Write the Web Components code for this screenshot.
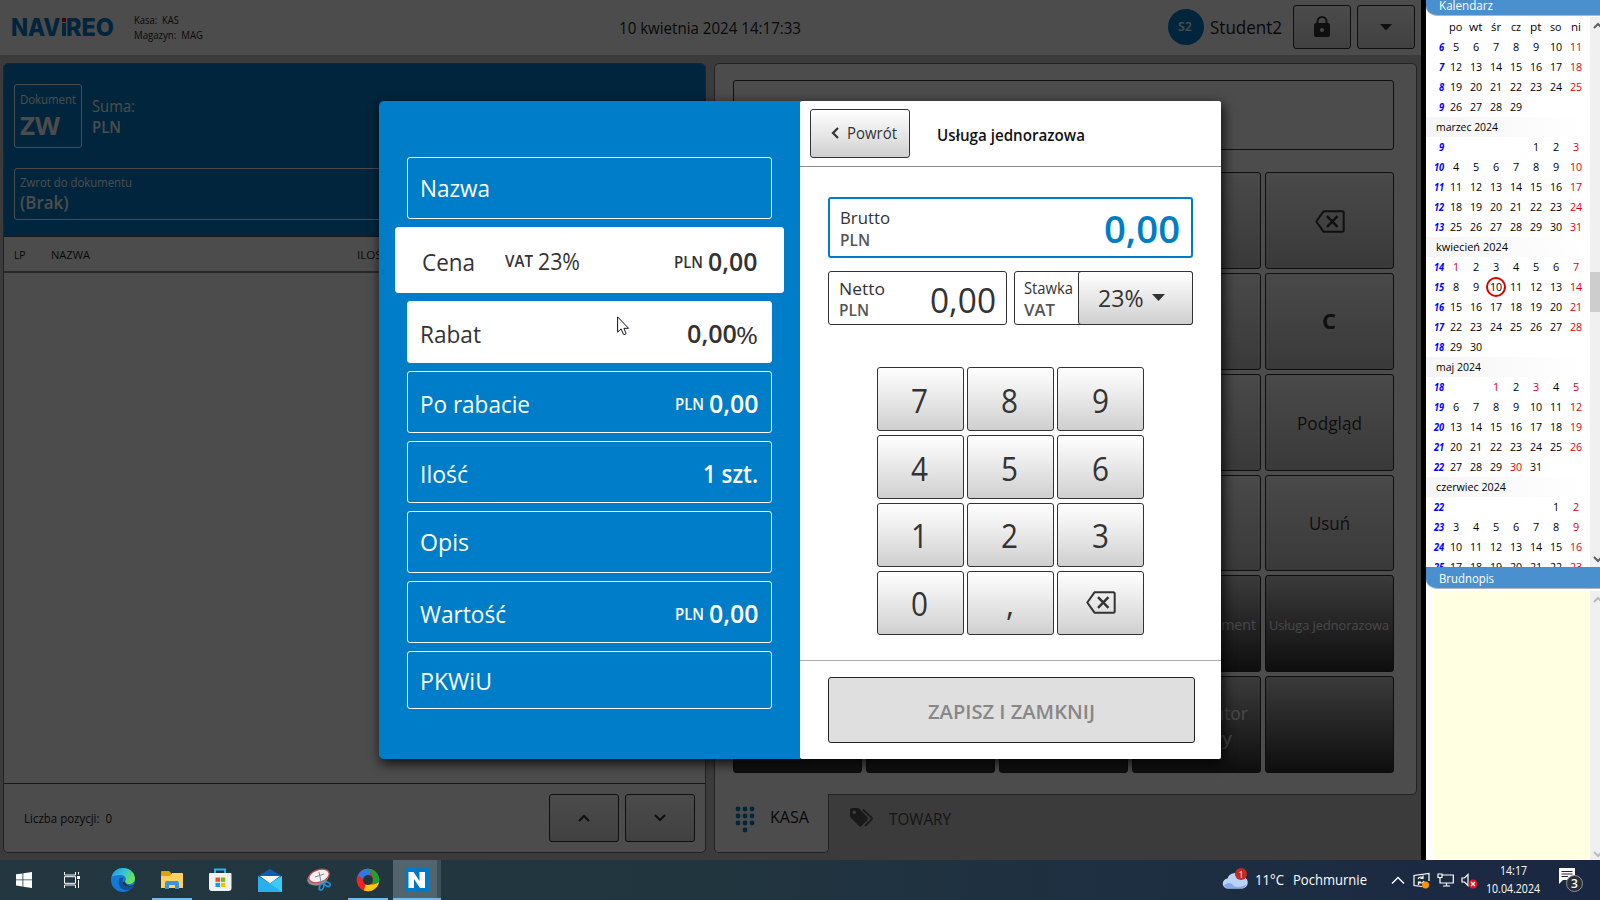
<!DOCTYPE html>
<html lang="pl">
<head>
<meta charset="utf-8">
<title>Navireo POS</title>
<style>
html,body{margin:0;height:100%;overflow:hidden;background:#000}
body{font-family:"Open Sans","Noto Sans",sans-serif;width:1600px;height:900px}
</style>
</head>
<body>
<pos-desktop></pos-desktop>
<script>
const define=(name,css,html)=>customElements.define(name,class extends HTMLElement{
  constructor(){
    super();
    const t=document.createElement('template');
    t.innerHTML=`<style>*{box-sizing:border-box}:host{display:block;box-sizing:border-box}${css}</style>${typeof html==='function'?'':html}`;
    this.attachShadow({mode:'open'}).append(t.content.cloneNode(true));
  }
  connectedCallback(){
    if(typeof html==='function'&&!this.done){
      this.done=true;
      const t=document.createElement('template');
      t.innerHTML=html(this);
      this.shadowRoot.append(t.content.cloneNode(true));
    }
  }
});

/* Single line of text condensed to a given width: s size, w width, b weight, h line height, c colour, k keeps the side bearing */
const lines=[];
customElements.define('t-x',class extends HTMLElement{
  constructor(){
    super();
    this.attachShadow({mode:'open'}).innerHTML='<style>:host{display:block;white-space:nowrap;flex:none}span{display:inline-block;transform-origin:0 50%;vertical-align:top}</style><span><slot></slot></span>';
    lines.push(this);
  }
  connectedCallback(){
    const g=k=>this.getAttribute(k),st=this.style;
    st.fontSize=g('s')+'px';
    st.lineHeight=(g('h')||Math.round(g('s')*1.3))+'px';
    st.height=st.lineHeight;
    if(g('b'))st.fontWeight=g('b');
    if(g('c'))st.color=g('c');
    if(g('w'))st.width=g('w')+'px';
  }
  fit(){
    if(!this.getAttribute('w'))return;
    const sp=this.shadowRoot.querySelector('span'),n=sp.offsetWidth&&sp.getBoundingClientRect().width;
    if(n)sp.style.transform=`translateX(${this.hasAttribute('k')?0:-1}px) scaleX(${(+this.getAttribute('w')+1)/n})`;
  }
});

const BACKSP=`<svg width="30" height="23" viewBox="0 0 30 23" fill="none" stroke="currentColor" stroke-width="2" stroke-linejoin="round"><path d="M8.5 1.3H27.2Q28.7 1.3 28.7 2.8V20.2Q28.7 21.7 27.2 21.7H8.5L1.3 11.5Z"/><path d="M12 6.2 22.5 16.8M22.5 6.2 12 16.8" stroke-width="2.4"/></svg>`;

define('pos-button',`:host{display:flex;align-items:center;justify-content:center;border:1px solid #333;border-radius:3px;background:linear-gradient(#fff,#e8e8e8 50%,#cfcfcf);color:#333}
:host([dark]){background:linear-gradient(#c4c4c4,#303030);border-color:#2c2c2c;color:#eee;padding-top:2px}
:host([flat]){background:linear-gradient(#fbfbfb,#d8d8d8)}
:host([pad]){background:linear-gradient(#f5f5f5,#c0c0c0);padding-top:2px}
:host([disabled]){background:#dfdfdf;color:#878787;border-color:#222;padding-top:3px}`,`<slot></slot>`);

define('brand-logo',`:host{display:flex;flex:none;width:102px;height:30px;color:#007dc8;font-family:Inter,sans-serif}
.i{width:4px;height:18px;margin:6px 1.5px 0 1px;background:linear-gradient(#e3001b 4px,transparent 4px,transparent 5px,#007dc8 5px)}`,
`<t-x s="24.5" w="48.500" b="800" h="30">NAV</t-x><div class="i"></div><t-x s="24.5" w="47" b="800" h="30">REO</t-x>`);

define('pos-header',`:host{display:flex;height:55px;background:#fff;color:#1c1c1c;padding-left:12px}
:host>*,div,pos-button{flex:none}
brand-logo{margin-top:12px}.info{margin:13px 0 0 20.5px;width:485px}
.dt{margin-top:16px;width:548px}.av{width:36px;height:36px;border-radius:50%;background:#007dc8;display:flex;justify-content:center;align-items:center;margin:9px 7px 0 0;color:#fff}
.u{margin:15px 11.5px 0 0}pos-button{width:58px;height:44px;margin:5px 6px 0 0}`,
`<brand-logo></brand-logo><div class="info"><t-x s="10" w="44" h="15">Kasa:&nbsp; KAS</t-x><t-x s="10" w="68" h="14">Magazyn:&nbsp; MAG</t-x></div>
<div class="dt"><t-x s="15.5" w="181" h="24">10 kwietnia 2024 14:17:33</t-x></div>
<div class="av"><t-x s="12" w="13" b="600" h="18">S2</t-x></div>
<div class="u"><t-x s="18" w="71" h="24">Student2</t-x></div>
<pos-button flat><svg width="18" height="22" viewBox="0 0 18 22"><path d="M4.5 9V5.5a4.5 4.5 0 0 1 9 0V9" fill="none" stroke="#333" stroke-width="2"/><rect x="1" y="7" width="16" height="14" rx="2" fill="#333"/><circle cx="9" cy="14" r="2" fill="#eee"/></svg></pos-button>
<pos-button flat><svg width="12" height="7"><path d="M0 0H12L6 6.5Z" fill="#333"/></svg></pos-button>`);

define('document-panel',`:host{display:flex;flex-direction:column;width:703px;height:790px;background:#fff;border:1px solid #777;border-radius:5px;overflow:hidden;color:#1c1c1c}
.top{height:173px;background:#007dc8;color:#fff;padding:20px 10px 0;border-bottom:1px solid #555}
.row{display:flex;height:84px}.doc{width:68px;height:64px;border:1px solid #fff;border-radius:3px;padding-left:5.5px}
.sum{padding:11px 0 0 11px}.ret{height:52px;border:1px solid #fff;border-radius:3px;padding:3px 0 0 5.5px}
.cols{display:flex;height:36px;border-bottom:2px solid #888;padding:8px 0 0 10.5px}
.list{flex:1}.foot{height:69px;border-top:1px solid #555;display:flex;padding:10px 10px 0 21px}
.cnt{flex:1;padding-top:14px}pos-button{width:70px;height:48px;margin-left:6px}`,
`<div class="top"><div class="row"><div class="doc"><t-x s="12" w="55" h="30">Dokument</t-x><t-x s="25" w="39" b="700" h="21">ZW</t-x></div>
<div class="sum"><t-x s="15.5" w="42" h="22">Suma:</t-x><t-x s="15.5" w="28" b="600" h="21">PLN</t-x></div></div>
<div class="ret"><t-x s="12" w="111" h="21">Zwrot do dokumentu</t-x><t-x s="18" w="47.5" b="600" h="18">(Brak)</t-x></div></div>
<div class="cols"><t-x s="11" w="10.5" h="20">LP</t-x><t-x s="11" w="38" h="20" style="margin-left:27px">NAZWA</t-x><t-x s="11" w="31" h="20" style="margin-left:268px">ILOŚĆ</t-x></div>
<div class="list"></div>
<div class="foot"><div class="cnt"><t-x s="12" w="87" h="22">Liczba pozycji:&nbsp; 0</t-x></div>
<pos-button flat><svg width="12" height="8" fill="none" stroke="#333" stroke-width="2"><path d="M1 7 6 2l5 5"/></svg></pos-button>
<pos-button flat><svg width="12" height="8" fill="none" stroke="#333" stroke-width="2"><path d="M1 1l5 5 5-5"/></svg></pos-button></div>`);

const E='<pos-button pad></pos-button>',D='<pos-button dark></pos-button>';
define('till-panel',`:host{width:703px}
.body{height:732px;background:#fff;border:1px solid #777;border-radius:5px 5px 5px 0;padding:16px 22px 0 18px}
.disp{height:70px;border:1px solid #333;border-radius:3px}
.keys{margin-top:22px;height:601px;display:grid;grid-template:repeat(6,1fr)/repeat(5,1fr);gap:4px}
.two{display:flex;flex-direction:column;align-items:center}
.tabs{display:flex;height:59px;margin-top:-1px;color:#1c1c1c}
.k{width:115px;height:59px;background:#fff;border:1px solid #777;border-top:0;border-radius:0 0 5px 5px;padding:12px 0 0 20px;display:flex;gap:15px}
.t{display:flex;padding:14px 0 0 21px;gap:16px}`,
`<div class="body"><div class="disp"></div><div class="keys">
${E.repeat(4)}<pos-button pad>${BACKSP}</pos-button>
${E.repeat(4)}<pos-button pad style="padding:0 1px 0 0"><t-x s="21" b="700" w="13">C</t-x></pos-button>
${E.repeat(4)}<pos-button pad><t-x s="18" w="64">Podgląd</t-x></pos-button>
${E.repeat(4)}<pos-button pad><t-x s="18" w="40">Usuń</t-x></pos-button>
${D.repeat(3)}<pos-button dark><t-x s="14.5" w="119">Otwórz dokument</t-x></pos-button><pos-button dark><t-x s="13.5" w="119">Usługa jednorazowa</t-x></pos-button>
${D.repeat(3)}<pos-button dark><div class="two"><t-x s="18" w="102" h="25">Konfigurator</t-x><t-x s="18" w="70" h="25">zestawy</t-x></div></pos-button>${D}
</div></div>
<div class="tabs"><div class="k"><svg width="21" height="27" fill="#007dc8">${[3,10,17].map(y=>[3,10,17].map(x=>`<circle cx="${x}" cy="${y}" r="2.4"/>`).join('')).join('')}<circle cx="10" cy="24" r="2.4"/></svg><t-x s="16" w="38" h="23">KASA</t-x></div>
<div class="t"><svg width="24" height="20" viewBox="0 0 24 20"><path d="M0 2Q0 0 2 0H8.5L17.5 9Q18.7 10.5 17.5 12L11.5 18Q10.2 19 9 18L0 9Z" fill="#555"/><circle cx="4.3" cy="4.3" r="1.8" fill="#c5c5c5"/><path d="M13 1.5 21.5 9.5Q22.3 10.5 21.5 11.5L15 18" fill="none" stroke="#555" stroke-width="1.8"/></svg><t-x s="15.5" w="61" h="23" c="#4a4a4a">TOWARY</t-x></div></div>`);

define('pos-app',`:host{display:flex;flex-direction:column;width:1421px;height:860px;background:#c5c5c5;overflow:hidden}
.m{display:flex;gap:8px;padding:8px 0 0 3px}`,
`<pos-header></pos-header><div class="m"><document-panel></document-panel><till-panel></till-panel></div>`);

/* Field tile of the item editor */
define('item-field',`:host{display:flex;align-items:center;height:62px;border:1px solid #fff;border-radius:3px;color:#fff;padding:0 13px 2px;margin:0 12px}
:host([value]){padding-top:2px;padding-bottom:0}:host([light]){background:#fff;color:#333}
:host([active]){height:66px;margin:0;padding:2px 26px 0 26.5px;background:#fff;color:#333}
:host([short]){height:58px;padding-top:3px}
.g{flex:1}slot[name=v]::slotted(*){position:relative;top:1px}`,`<slot></slot><div class="g"></div><slot name="v"></slot>`);

const val=(pln,w=48.5)=>`${pln?`<t-x slot="v" s="15.5" b="600" w="28" style="margin-right:6px">PLN</t-x>`:''}<t-x slot="v" s="24.5" b="600" w="${w}">0,00</t-x>`;
define('item-fields',`:host{width:421px;background:#007dc8;border-radius:5px 0 0 5px;padding:56px 16px 0;display:flex;flex-direction:column;gap:8px}`,
`<item-field><t-x s="24" w="69">Nazwa</t-x></item-field>
<item-field active><t-x s="24" w="52">Cena</t-x><t-x s="15.5" b="600" w="27" style="margin-left:31.5px">VAT</t-x><t-x s="23" w="41" style="margin-left:5.5px">23%</t-x>${val(1)}</item-field>
<item-field value light><t-x s="24" w="60">Rabat</t-x>${val(0,49)}<t-x slot="v" s="24" b="500" w="21">%</t-x></item-field>
<item-field value><t-x s="24" w="109">Po rabacie</t-x>${val(1)}</item-field>
<item-field value><t-x s="24" w="47">Ilość</t-x><t-x slot="v" s="24.5" b="600" w="54">1 szt.</t-x></item-field>
<item-field><t-x s="24" w="48">Opis</t-x></item-field>
<item-field value><t-x s="24" w="85">Wartość</t-x>${val(1)}</item-field>
<item-field short><t-x s="24" w="71">PKWiU</t-x></item-field>`);

define('price-editor',`:host{width:421px;background:#fff;border-radius:2px;color:#333}
.h{height:66px;border-bottom:1px solid #8c8c8c;display:flex;padding:8px 0 0 10px}
.h pos-button{width:100px;height:49px;gap:9px;padding:0 0 1px 7px}.h>t-x{margin:14px 0 0 28px}
.b{padding:30px 28px 0;height:494px;border-bottom:1px solid #aaa}
.br{height:61px;border:2px solid #007dc8;border-radius:3px;display:flex;justify-content:space-between;padding:7px 11px 0 10.5px}
.r{display:flex;gap:7px;margin-top:13px;height:54px}
.n{width:179px;border:1px solid #333;border-radius:3px;display:flex;justify-content:space-between;padding:5px 10px 0 10.5px}
.s{width:179px;border:1px solid #333;border-radius:3px;display:flex;padding-left:10px;justify-content:space-between}
.s>div{padding-top:5px}.s pos-button{width:115px;height:54px;margin:-1px;gap:9px;padding-right:7px}
.k{width:267px;margin:42px auto 0 49px;height:268px;display:grid;grid-template:repeat(4,1fr)/repeat(3,1fr);gap:3.5px}
.k pos-button{padding-top:3px}.sv{height:66px;margin:16px 26px 0 28px}`,
`<div class="h"><pos-button><svg width="8" height="12" fill="none" stroke="#333" stroke-width="2.2"><path d="M7 1 2 6l5 5"/></svg><t-x s="15.5" w="49">Powrót</t-x></pos-button><t-x s="15.5" b="600" w="147" h="24" c="#111">Usługa jednorazowa</t-x></div>
<div class="b"><div class="br"><div><t-x s="17" w="49" h="24">Brutto</t-x><t-x s="15.5" b="600" w="29" h="21" c="#555">PLN</t-x></div><t-x s="38.5" b="600" w="75" h="44" c="#007dc8">0,00</t-x></div>
<div class="r"><div class="n"><div><t-x s="17" w="45" h="24">Netto</t-x><t-x s="15.5" b="600" w="29" h="19" c="#555">PLN</t-x></div><t-x s="35.5" w="65" h="44">0,00</t-x></div>
<div class="s"><div><t-x s="16" w="48" h="22">Stawka</t-x><t-x s="16.5" b="600" w="30" h="21" c="#555">VAT</t-x></div><pos-button><t-x s="23" w="44.5">23%</t-x><svg width="13" height="8"><path d="M0 0H13L6.5 7Z" fill="#333"/></svg></pos-button></div></div>
<div class="k">${'789456123'.split('').map(n=>`<pos-button><t-x s="32" w="16">${n}</t-x></pos-button>`).join('')}<pos-button><t-x s="32" w="16">0</t-x></pos-button><pos-button><t-x s="32" w="7">,</t-x></pos-button><pos-button style="padding:0 0 1px 1px">${BACKSP}</pos-button></div></div>
<pos-button class="sv" disabled><t-x s="20" b="600" w="166">ZAPISZ I ZAMKNIJ</t-x></pos-button>`);

define('item-dialog',`:host{position:absolute;left:0;top:0;width:1421px;height:860px;background:rgba(0,0,0,.7);display:flex;justify-content:flex-start;align-items:flex-start;padding:101px 0 0 379px}
.d{display:flex;width:842px;height:658px;border-radius:5px;box-shadow:2px 4px 12px 1px rgba(0,0,0,.75)}
.c{position:absolute;left:617px;top:316px}`,
`<div class="d"><item-fields></item-fields><price-editor></price-editor></div>
<svg class="c" width="13" height="20" viewBox="0 0 13 20"><path d="M.6.9V16.2L4.1 12.9 6.5 18.4Q8 19 9.1 17.5L6.9 12.3H11.6Z" fill="#fff" stroke="#112" stroke-width="1"/></svg>`);

define('panel-title',`:host{height:21px;flex:none;background:#4a90cf;border-bottom-left-radius:11px 10px;border-bottom:1px solid #b5b5b5;padding-left:13px;color:#fff}`,`<slot></slot>`);

const months=[['',[6,5,29,0]],['marzec 2024',[9,1,31,4]],['kwiecień 2024',[14,1,30,0]],['maj 2024',[18,1,31,2]],['czerwiec 2024',[22,1,23,5]]];
const red={2:[1],3:[1,3,30]};
define('month-calendar',`:host{flex:none;height:552px;width:174px;background:#fff;display:flex;color:#000}
.m{width:164px;overflow:hidden;padding-top:1px}.r{display:grid;grid-template-columns:20px repeat(7,20px);height:20px}
.r>*{display:flex;justify-content:center}.wk{justify-content:flex-end;padding-right:3px;color:#00f;font-style:italic}
.mn{height:20px;padding-left:10.5px;background:linear-gradient(90deg,#f5f5f5,#fff);width:160px}.red{color:#d9000d}
.today{position:relative}.today::after{content:"";position:absolute;inset:0;border:2px solid #d40000;border-radius:10px}
.sb{width:10px;background:#f0f0f0;display:flex;flex-direction:column;margin-top:1px}`,
()=>{
  const cell=(v,c='')=>`<div class="${c}">${v===''?'':`<t-x k s="11" h="20" w="${String(v).length*6-.8}">${v}</t-x>`}</div>`;
  let o='<div class="m"><div class="r"><div></div>'+['po','wt','śr','cz','pt','so','ni'].map(d=>`<div><t-x s="11.5" h="20" w="${/wt|po/.test(d)?12.5:/śr|cz|ni/.test(d)?9:10.5}">${d}</t-x></div>`).join('')+'</div>';
  months.forEach(([name,[w,first,last,off]],mi)=>{
    if(name)o+=`<div class="mn"><t-x s="11.5" h="20" w="${[0,61,71,44,69][mi]}">${name}</t-x></div>`;
    let d=first,k=off;
    while(d<=last){
      o+=`<div class="r"><div class="wk"><t-x k s="11" b="700" h="20" w="${String(w).length*5-.8}">${w}</t-x></div>`;
      for(let i=0;i<7;i++){
        if(k>0||d>last){o+=cell('');k--;}
        else{o+=cell(d,(i===6||(red[mi]||[]).includes(d)?'red ':'')+(mi===2&&d===10?'today':''));d++;}
      }
      w++;o+='</div>';
    }
  });
  return o+`</div><div class="sb"><svg width="10" height="550" fill="none" stroke="#606060" stroke-width="2"><rect y="255" width="10" height="40" fill="#cdcdcd" stroke="none"/><path d="M4 11l4-4 4 4M4 540l4 4 4-4"/></svg></div>`;
});

define('side-bar',`:host{width:179px;height:860px;display:flex;flex-direction:column;background:#fff;border-left:5px solid #000;overflow:hidden}
.note{flex:1;display:flex;padding:2px 0 0 7px}.y{width:157px;background:#ffffe1}.s{width:10px;background:#f0f0f0}`,
`<panel-title style="height:16px"><t-x k s="12" w="53" h="12">Kalendarz</t-x></panel-title><month-calendar style="height:551px"></month-calendar>
<panel-title style="height:22px"><t-x k s="12" w="54" h="23">Brudnopis</t-x></panel-title>
<div class="note"><div class="y"></div><div class="s"><svg width="10" height="269" fill="none" stroke="#bbb" stroke-width="2"><path d="M4 11l4-4 4 4M4 261l4 4 4-4"/></svg></div></div>`);

define('task-button',`:host{width:49px;height:40px;display:flex;justify-content:center;align-items:center}
:host([running]){background:linear-gradient(#76b9ed,#76b9ed) center bottom/40px 2px no-repeat}
:host([current]){width:48px;margin-left:1px;justify-content:flex-start;padding-left:12px;background:linear-gradient(#76b9ed,#76b9ed) left bottom/48px 2px no-repeat,linear-gradient(90deg,#52646d 44px,#3d4f59 44px)}`,`<slot></slot>`);

define('task-bar',`:host{width:1600px;height:40px;display:flex;background:linear-gradient(90deg,#22373f,#21353f 45%,#1c2d41 78%,#1a2742);color:#fff}
.g{flex:1}.tray{display:flex;width:380px;align-items:center}.clock{display:flex;flex-direction:column;align-items:center;width:54px;margin-left:9px}
.n{position:relative;width:26px;height:26px;margin-left:17px}`,
`<task-button style="width:48px"><svg width="16" height="16" fill="#fff"><path d="M0 2.3 6.5 1.4V7.5H0ZM7.3 1.3 16 0V7.5H7.3ZM0 8.3H6.5V14.5L0 13.6ZM7.3 8.3H16V16L7.3 14.7Z"/></svg></task-button>
<task-button style="width:48px"><svg width="16" height="16" fill="none" stroke="#fff"><path d="M.5 0V3H11.5V0M.5 16V13H11.5V16M.5 4.7H11.5V11.3H.5ZM14.5 0V2.5M14.5 8V16"/><path d="M13 4h3v3h-3z" fill="#fff" stroke="none"/></svg></task-button>
<task-button style="width:53px"><svg width="24" height="24" viewBox="0 0 24 24"><defs><linearGradient id="a" x1="0" y1="0" x2="1" y2=".5"><stop offset="0" stop-color="#2590df"/><stop offset=".5" stop-color="#33bfe0"/><stop offset="1" stop-color="#6fe34f"/></linearGradient></defs><circle cx="12" cy="12" r="12" fill="#1479d2"/><path d="M.5 9C2 3 7 0 12 0c7 0 12 5 12 10.500 0 3.500-3 5.500-6 5.500-2.500 0-4-1-4-2.500 0-.8.9-1.200.9-2.700C14.900 8.600 12.500 7 9 7 5 7 2 8 .5 9Z" fill="url(#a)"/><path d="M8 11.500C6 19 13 24 19 21.500 21 20.500 22.500 19 23 17.800 19 20 12.500 19 11.500 14.500 11 12 12.500 10 12.500 10 10.500 9.500 8.500 10 8 11.500Z" fill="#124f9c"/><path d="M11.500 14.500C12.500 19 19 20 23 17.800c.5-.8.3-1.300-.4-1-4 2-8 .5-8.600-3.300Z" fill="#22373f"/></svg></task-button>
<task-button running style="width:46px"><svg width="22" height="18"><path d="M0 2V1Q0 0 1 0H8L10 2V5H0Z" fill="#e0a010"/><path d="M0 5H9L11 2H21Q22 2 22 3V17H0Z" fill="#ffd262"/><path d="M4 18V12Q4 10 6 10H16Q18 10 18 12V18H14V14H8V18Z" fill="#3c92dc"/></svg></task-button>
<task-button style="width:50px"><svg width="24" height="24"><path d="M7 6V1.500H17V6" fill="none" stroke="#29b6f0" stroke-width="2"/><path d="M1 6Q1 5 2 5H22.500Q23.500 5 23.500 6V20Q23.500 23 20.500 23H4Q1 23 1 20Z" fill="#f2f2f2"/><path d="M7.500 9.500H12V13.800H7.500Z" fill="#f25022"/><path d="M13 9.500h4.200v4.300H13Z" fill="#7fba00"/><path d="M7.500 14.800H12V19H7.500Z" fill="#00a4ef"/><path d="M13 14.800h4.200V19H13Z" fill="#ffb900"/></svg></task-button>
<task-button><svg width="24" height="23"><path d="M0 7 12 0 24 7V12H0Z" fill="#0c5ead"/><path d="M0 7V23H24V7L12 14.500Z" fill="#28b0ee"/><path d="M2 7H22L12 14.500Z" fill="#f4f4f4"/><path d="M24 7V23L12 14.500Z" fill="#3acbf8"/></svg></task-button>
<task-button><svg width="24" height="24"><ellipse cx="11" cy="10" rx="11" ry="7" transform="rotate(-18 11 10)" fill="#8f9598"/><ellipse cx="12" cy="8" rx="10.500" ry="6.300" transform="rotate(-18 12 8)" fill="#f2f2f2" stroke="#c94a48" stroke-width="1.300"/><path d="M8 9 17 6M12 4l2 10 5-2" stroke="#889" fill="none" stroke-width="1"/><ellipse cx="15" cy="19" rx="2" ry="3.400" transform="rotate(25 15 18)" stroke="#2a8fd0" fill="none" stroke-width="1.700"/><ellipse cx="20.500" cy="16" rx="3" ry="2" transform="rotate(25 20 16)" stroke="#2a8fd0" fill="none" stroke-width="1.700"/></svg></task-button>
<task-button running><svg width="24" height="24" viewBox="0 0 24 24"><circle cx="12" cy="12" r="11.300" fill="#ee2525"/><path d="M1.500 8A11.300 11.300 0 0 1 15 1.200L14 8 7 11Q4 8 1.500 8Z" fill="#2f78e6"/><path d="M11 .8A11.300 11.300 0 0 1 22.500 16Q19 17.500 16 15.500L17 10Q16 4 11 .8Z" fill="#18a52c"/><path d="M23 14A11.300 11.300 0 0 1 8 22.500L9.500 16.500 15 16.500Q20 17 23 14Z" fill="#ffc90a"/><circle cx="12" cy="12" r="4.900" fill="#22353f"/></svg></task-button>
<task-button current><svg width="24" height="24"><path d="M0 0H24V24H0Z" fill="#007ac6"/><path d="M3.500 20V4H8.500L14.500 13V4H20V20H15L9 11V20Z" fill="#fff"/></svg></task-button>
<div class="g"></div>
<div class="tray"><svg width="28" height="24" viewBox="0 0 28 24" style="margin-left:2px"><path d="M6 20.500a5 5 0 0 1-.5-10A7.500 7.500 0 0 1 19 8.500a6 6 0 0 1 1.500 12Z" fill="#b9d2f6"/><path d="M2 17q6-4 9 0t13 0q-1 3.500-4 3.500H6Q2.500 20.500 2 17Z" fill="#86a9ec"/><circle cx="19" cy="6" r="6" fill="#c42b1c"/><text x="19" y="9.500" font-size="9" text-anchor="middle" fill="#fff">1</text></svg>
<t-x s="14" w="28" style="margin-left:6px">11°C</t-x><t-x s="14" w="73" style="margin-left:9.500px">Pochmurnie</t-x>
<svg width="14" height="9" fill="none" stroke="#fff" stroke-width="1.400" style="margin-left:24px"><path d="M1 7.500 7 1.500l6 6"/></svg>
<svg width="17" height="17" fill="none" stroke="#fff" stroke-width="1.200" style="margin-left:8px"><path d="M9 14.500 1 13.500V3.500L16 1.500V9"/><path d="M5 7q1-2.500 5-1.500M10 3.500v3H7.500M11 9q-1 3-5 1.500M5.500 13v-3H8"/><circle cx="12.500" cy="13" r="3.500" fill="#ff9500" stroke="none"/></svg>
<svg width="17" height="14" fill="none" stroke="#fff" stroke-width="1.200" style="margin-left:7px"><path d="M5 2H16.300V10H3V7M9.500 10v3M6 13h7M1 1h4v3.500H1ZM3 4.500V7"/></svg>
<svg width="17" height="17" fill="none" stroke="#fff" stroke-width="1.200" style="margin-left:7px"><path d="M1 6H3.500L7 2.500V13.500L3.500 10H1Z"/><circle cx="12" cy="12" r="4.500" fill="#e81123" stroke="none"/><path d="M10 10l4 4M14 10l-4 4"/></svg>
<div class="clock"><t-x s="12" w="26" h="18">14:17</t-x><t-x s="12" w="53" h="18">10.04.2024</t-x></div>
<div class="n"><svg width="26" height="26"><path d="M1 1H17V13H5L1 17Z" fill="#fff"/><path d="M3.500 4.500H14.500M3.500 7H14.500M3.500 9.500H10" stroke="#1c2942"/><circle cx="16.500" cy="16.500" r="8" fill="#2a2f36" stroke="#8b919b"/><text x="16.500" y="21" font-size="12" font-weight="600" text-anchor="middle" fill="#fff">3</text></svg></div></div>`);

define('pos-desktop',`:host{position:relative;width:1600px;height:900px;display:grid;grid-template:860px 40px/1421px 179px;overflow:hidden}task-bar{grid-column:1/3}`,
`<pos-app></pos-app><side-bar></side-bar><task-bar></task-bar><item-dialog></item-dialog>`);

lines.forEach(l=>l.isConnected&&l.fit());
</script>
</body>
</html>
